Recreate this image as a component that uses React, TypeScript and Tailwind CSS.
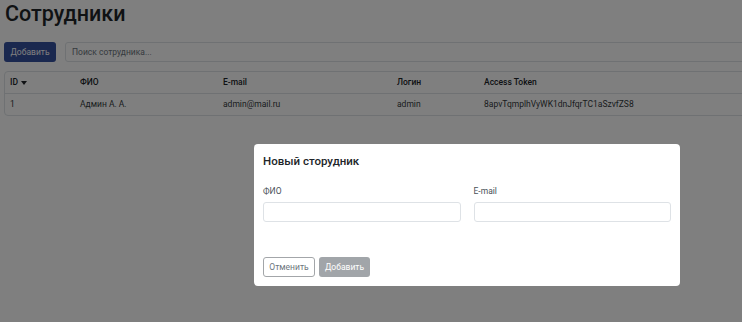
import React from "react";

export default function App() {
  return (
    <div className="relative w-[742px] h-[322px] overflow-hidden bg-white font-['Roboto',sans-serif] text-[#212529]">
      <div className="w-[820px] pl-[4px]">
        <h1 className="pl-[1px] pt-0 text-[21.5px] leading-[28px] font-medium">Сотрудники</h1>
        <div className="mt-[14px] flex gap-[9px] h-[20px]">
          <button className="w-[52px] h-[20px] rounded-[3px] bg-[#34509e] text-white text-[8.5px] leading-none">Добавить</button>
          <div className="flex-1 h-[20px] rounded-[3px] border border-[#dee2e6] flex items-center pl-[6px] text-[8.5px] text-[#6c757d]">
            Поиск сотрудника...
          </div>
        </div>
        <div className="mt-[9px] rounded-[4px] border border-[#dee2e6] text-[8.5px]">
          <div className="flex h-[22px] items-center border-b border-[#dee2e6] font-medium">
            <div className="w-[75px] pl-[5px] flex items-center gap-[3px]">
              ID
              <svg width="6" height="4" viewBox="0 0 6 4"><path d="M0 0h6L3 4z" fill="currentColor" /></svg>
            </div>
            <div className="w-[143px]">ФИО</div>
            <div className="w-[174px]">E-mail</div>
            <div className="w-[87px]">Логин</div>
            <div>Access Token</div>
          </div>
          <div className="flex h-[21px] items-center text-[#343a40]">
            <div className="w-[75px] pl-[5px]">1</div>
            <div className="w-[143px]">Админ А. А.</div>
            <div className="w-[174px]">admin@mail.ru</div>
            <div className="w-[87px]">admin</div>
            <div>8apvTqmplhVyWK1dnJfqrTC1aSzvfZS8</div>
          </div>
        </div>
      </div>

      <div className="absolute inset-0 bg-black/50" />

      <div className="absolute left-[254px] top-[144px] w-[426px] h-[142px] rounded-[4px] bg-white px-[9px] pt-[9px] flex flex-col">
        <div className="text-[11.5px] leading-[16px] font-medium text-[#212529]">Новый сторудник</div>
        <div className="mt-[16px] flex gap-[13px]">
          <div className="flex-1 flex flex-col">
            <label className="text-[8.5px] leading-[12px] text-[#495057]">ФИО</label>
            <div className="mt-[5px] h-[20px] rounded-[3px] border border-[#dee2e6]" />
          </div>
          <div className="flex-1 flex flex-col">
            <label className="text-[8.5px] leading-[12px] text-[#495057]">E-mail</label>
            <div className="mt-[5px] h-[20px] rounded-[3px] border border-[#dee2e6]" />
          </div>
        </div>
        <div className="mt-[35px] flex gap-[4px]">
          <button className="w-[52px] h-[20px] rounded-[3px] border border-[#a3a6a9] text-[#6c757d] text-[8.5px] leading-none">Отменить</button>
          <button className="w-[51px] h-[20px] rounded-[3px] bg-[#a1a5a9] text-white text-[8.5px] leading-none">Добавить</button>
        </div>
      </div>
    </div>
  );
}
